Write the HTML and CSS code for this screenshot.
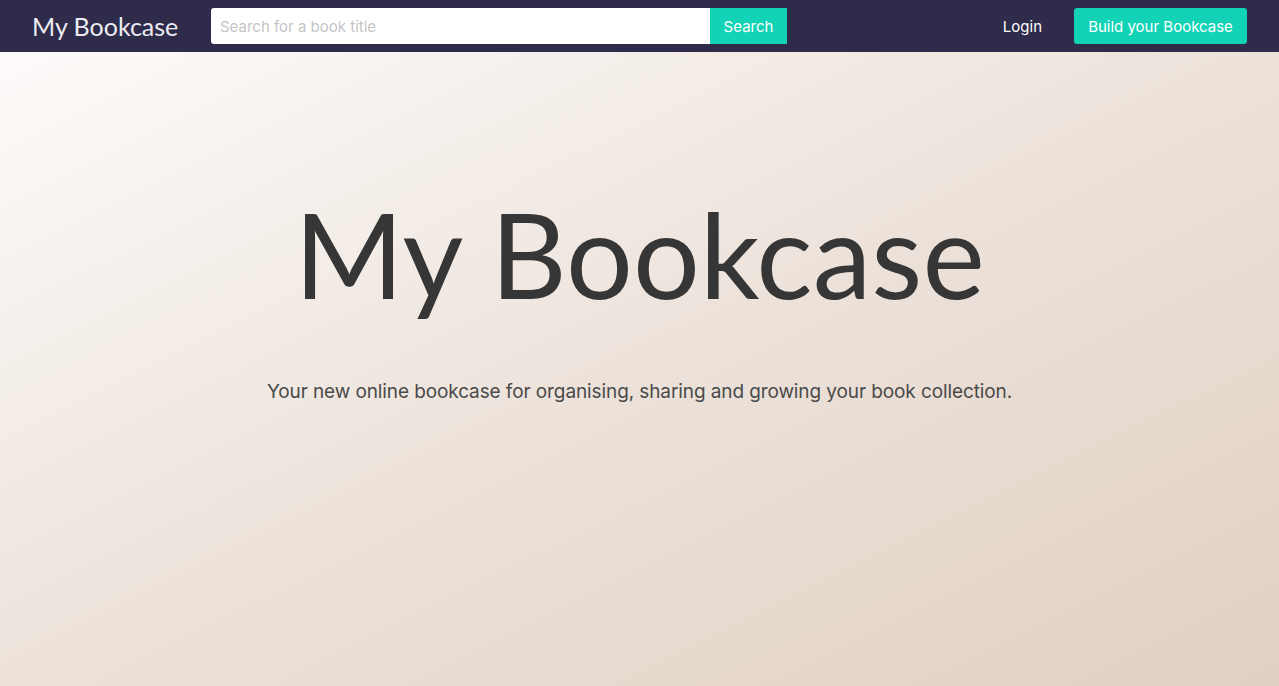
FILE: index.html
```html
<!DOCTYPE html>
<html lang="en">
<head>
<meta charset="utf-8">
<title>My Bookcase</title>
<link rel="stylesheet" href="styles.css">
</head>
<body>
<nav class="navbar">
  <a class="brand" href="#">My Bookcase</a>
  <form class="search">
    <input class="search-input" type="text" placeholder="Search for a book title">
    <button class="search-btn" type="button">Search</button>
  </form>
  <div class="nav-right">
    <a class="login" href="#">Login</a>
    <a class="build-btn" href="#">Build your Bookcase</a>
  </div>
</nav>
<main class="hero">
  <h1 class="hero-title">My Bookcase</h1>
  <p class="hero-sub">Your new online bookcase for organising, sharing and growing your book collection.</p>
</main>
</body>
</html>
```
FILE: styles.css
```css
* { box-sizing: border-box; }
html, body { margin: 0; padding: 0; height: 100%; }
body {
  font-family: "Inter", "Roboto", "Liberation Sans", sans-serif;
  display: flex;
  flex-direction: column;
  overflow: hidden;
}
.navbar {
  height: 52px;
  flex: 0 0 52px;
  background: #2e2b4b;
  display: flex;
  align-items: center;
  padding: 0 32px;
}
.brand {
  font-family: "Lato", "Noto Sans", sans-serif;
  font-size: 25px;
  color: #ececf0;
  text-decoration: none;
  width: 179px;
  white-space: nowrap;
}
.search {
  display: flex;
  height: 36px;
}
.search-input {
  width: 499px;
  height: 36px;
  border: none;
  border-radius: 3px 0 0 3px;
  padding: 0 9px;
  font-family: inherit;
  font-size: 15px;
  color: #333;
  background: #fff;
  outline: none;
}
.search-input::placeholder { color: #c4c4c6; }
.search-btn {
  width: 77px;
  height: 36px;
  border: none;
  background: #12d3b5;
  color: #fff;
  font-family: inherit;
  font-size: 15px;
  padding: 0;
}
.nav-right {
  margin-left: auto;
  display: flex;
  align-items: center;
}
.login {
  color: #fff;
  text-decoration: none;
  font-size: 15px;
  margin-right: 32px;
}
.build-btn {
  background: #12d3b5;
  color: #fff;
  text-decoration: none;
  font-size: 15px;
  height: 36px;
  width: 173px;
  display: flex;
  align-items: center;
  justify-content: center;
  border-radius: 3px;
}
.hero {
  flex: 1;
  background: linear-gradient(to bottom right, #fdfbfa 0%, #ece2da 50%, #e1d0c2 100%);
  display: flex;
  flex-direction: column;
  align-items: center;
  padding-top: 140px;
}
.hero-title {
  margin: 0;
  font-family: "Lato", "Noto Sans", sans-serif;
  font-weight: 400;
  font-size: 118px;
  line-height: 124px;
  color: #363636;
}
.hero-sub {
  margin: 64px 0 0;
  font-size: 19px;
  color: #4a4a4a;
  letter-spacing: -0.1px;
}
```
